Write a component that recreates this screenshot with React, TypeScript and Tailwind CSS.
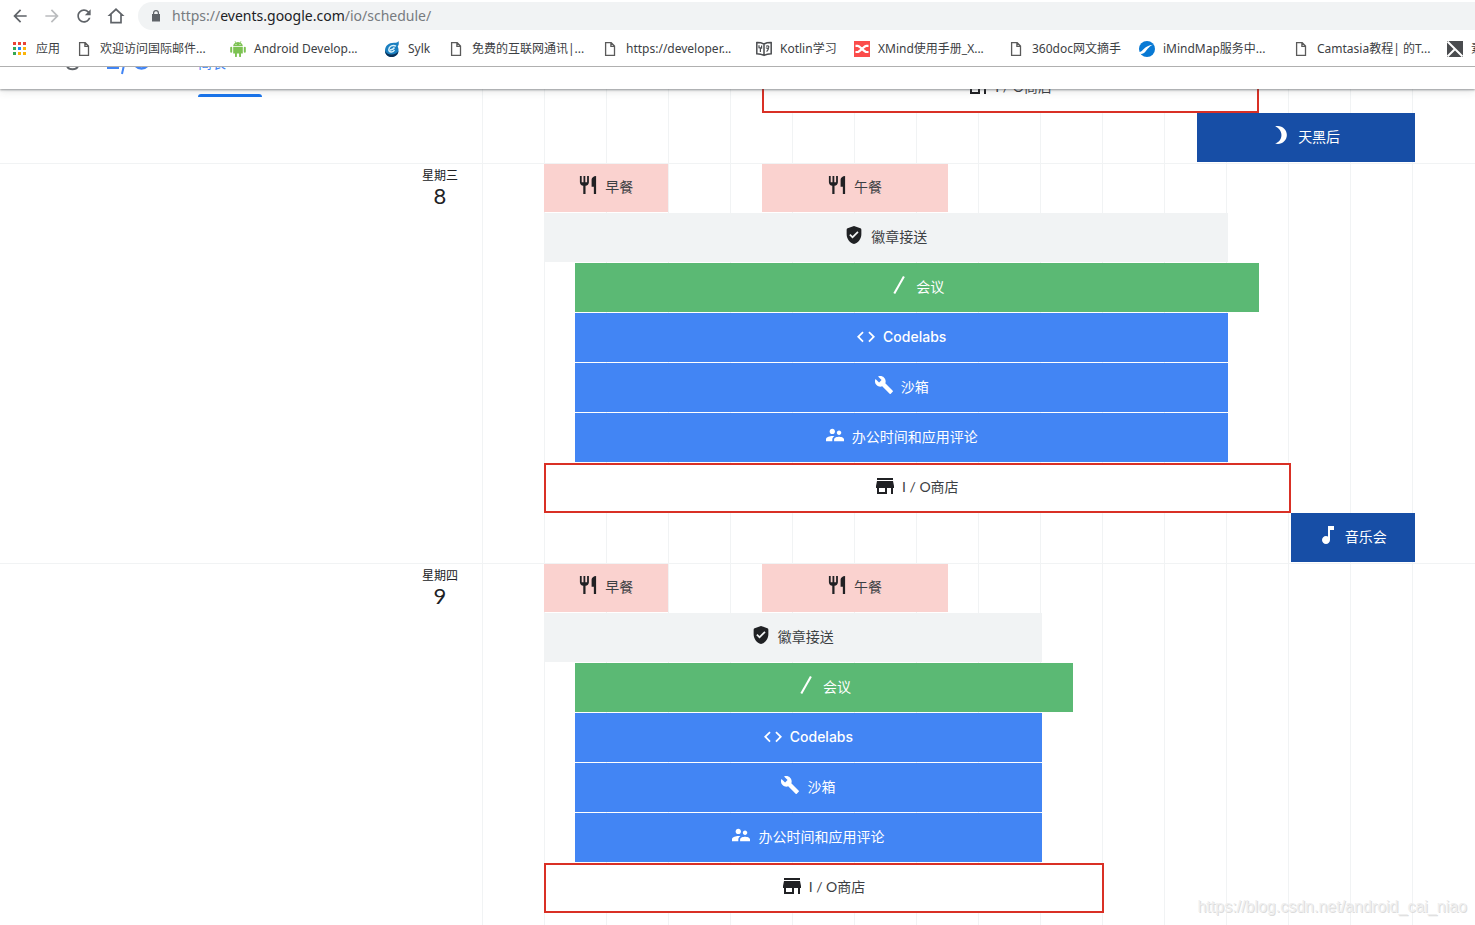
import React from "react";

type IconName = "food" | "badge" | "slash" | "code" | "wrench" | "people" | "store" | "moon" | "music";

const icons: Record<IconName, { box: string; d: string }> = {
  food: {
    box: "2 2 20 20",
    d: "M11 9H9V2H7v7H5V2H3v7c0 2.12 1.66 3.84 3.75 3.97V22h2.5v-9.03C11.34 12.84 13 11.12 13 9V2h-2v7zm5-3v8h2.5v8H21V2c-2.76 0-5 2.24-5 4z",
  },
  badge: {
    box: "1 1 22 22",
    d: "M12 1L4.2 3.8Q3 4.3 3 5.6V11c0 5.55 3.84 10.9 9 12 5.16-1.1 9-6.45 9-12V5.6q0-1.3-1.2-1.8L12 1zm-1.8 15.2l-4-4 1.5-1.5 2.5 2.5 5.9-5.9 1.5 1.5-7.4 7.4z",
  },
  slash: { box: "0 0 18 18", d: "M13 0l1.8.9L5.200 18l-1.800-.9z" },
  code: {
    box: "2 0 20 20",
    d: "M9.4 16.6L4.8 12l4.6-4.6L8 6l-6 6 6 6 1.4-1.4zm5.2 0l4.6-4.6-4.6-4.6L16 6l6 6-6 6-1.4-1.4z",
  },
  wrench: {
    box: "1 1 22 22",
    d: "M22.7 19l-9.1-9.1c.9-2.3.4-5-1.5-6.9-2-2-5-2.4-7.4-1.3L9 6 6 9 1.6 4.7C.4 7.1.9 10.1 2.9 12.1c1.9 1.9 4.6 2.4 6.9 1.5l9.1 9.1c.4.4 1 .4 1.4 0l2.3-2.3c.5-.4.5-1.1.1-1.4z",
  },
  people: {
    box: "2 2 20 20",
    d: "M16.5 12c1.38 0 2.49-1.12 2.49-2.5S17.88 7 16.5 7C15.12 7 14 8.12 14 9.5s1.12 2.5 2.5 2.5zM9 11c1.66 0 2.99-1.34 2.99-3S10.66 5 9 5C7.34 5 6 6.34 6 8s1.34 3 3 3zm7.5 3c-1.83 0-5.5.92-5.5 2.75V19h11v-2.25c0-1.83-3.67-2.75-5.5-2.75zM9 13c-2.33 0-7 1.17-7 3.5V19h7v-2.25c0-.85.33-2.34 2.37-3.47C10.5 13.1 9.66 13 9 13z",
  },
  store: {
    box: "3 2 18 18",
    d: "M20 4H4v2h16V4zm1 10v-2l-1-5H4l-1 5v2h1v6h10v-6h4v6h2v-6h1zm-9 4H6v-4h6v4z",
  },
  moon: {
    box: "2.5 2 20 20",
    d: "M9 2c-1.05 0-2.05.16-3 .46 4.06 1.27 7 5.06 7 9.54 0 4.48-2.94 8.27-7 9.54.95.3 1.95.46 3 .46 5.52 0 10-4.48 10-10S14.52 2 9 2z",
  },
  music: {
    box: "3 3 18 18",
    d: "M12 3v10.55c-.59-.34-1.27-.55-2-.55-2.21 0-4 1.79-4 4s1.79 4 4 4 4-1.79 4-4V7h4V3h-6z",
  },
};

type Tone = "pink" | "gray" | "green" | "blue" | "outline" | "navy";

const tones: Record<Tone, string> = {
  pink: "mb-px bg-[#fad2cf] text-[#3c4043]",
  gray: "mb-px bg-[#f1f3f4] text-[#3c4043]",
  green: "mb-px bg-[#5bb974] text-white",
  blue: "mb-px bg-[#4285f4] text-white",
  outline: "border-2 border-[#d93025] bg-white text-[#3c4043]",
  navy: "mb-px bg-[#174ea6] text-white",
};

type Session = { label: string; icon: IconName; tone: Tone; row: number; from: number; to: number };

const tuesday: Session[] = [
  { label: "I / O商店", icon: "store", tone: "outline", row: 1, from: 7, to: 23 },
  { label: "天黑后", icon: "moon", tone: "navy", row: 2, from: 21, to: 28 },
];

const wednesday: Session[] = [
  { label: "早餐", icon: "food", tone: "pink", row: 1, from: 0, to: 4 },
  { label: "午餐", icon: "food", tone: "pink", row: 1, from: 7, to: 13 },
  { label: "徽章接送", icon: "badge", tone: "gray", row: 2, from: 0, to: 22 },
  { label: "会议", icon: "slash", tone: "green", row: 3, from: 1, to: 23 },
  { label: "Codelabs", icon: "code", tone: "blue", row: 4, from: 1, to: 22 },
  { label: "沙箱", icon: "wrench", tone: "blue", row: 5, from: 1, to: 22 },
  { label: "办公时间和应用评论", icon: "people", tone: "blue", row: 6, from: 1, to: 22 },
  { label: "I / O商店", icon: "store", tone: "outline", row: 7, from: 0, to: 24 },
  { label: "音乐会", icon: "music", tone: "navy", row: 8, from: 24, to: 28 },
];

const thursday: Session[] = [
  { label: "早餐", icon: "food", tone: "pink", row: 1, from: 0, to: 4 },
  { label: "午餐", icon: "food", tone: "pink", row: 1, from: 7, to: 13 },
  { label: "徽章接送", icon: "badge", tone: "gray", row: 2, from: 0, to: 16 },
  { label: "会议", icon: "slash", tone: "green", row: 3, from: 1, to: 17 },
  { label: "Codelabs", icon: "code", tone: "blue", row: 4, from: 1, to: 16 },
  { label: "沙箱", icon: "wrench", tone: "blue", row: 5, from: 1, to: 16 },
  { label: "办公时间和应用评论", icon: "people", tone: "blue", row: 6, from: 1, to: 16 },
  { label: "I / O商店", icon: "store", tone: "outline", row: 7, from: 0, to: 18 },
];

function Bar({ item }: { item: Session }) {
  const light = item.tone === "green" || item.tone === "blue" || item.tone === "navy";
  return (
    <a
      href="#"
      className={`flex items-center justify-center gap-2 pb-0.5 text-sm ${item.icon === "code" ? "font-['Inter'] font-medium" : ""} ${tones[item.tone]}`}
      style={{ gridRow: item.row, gridColumn: `${item.from + 1} / ${item.to + 1}` }}
    >
      <svg
        viewBox={icons[item.icon].box}
        className={`mb-1 size-[18px] shrink-0 ${light ? "fill-white" : "fill-[#202124]"}`}
        aria-hidden="true"
      >
        <path d={icons[item.icon].d} />
      </svg>
      <span className="whitespace-nowrap">{item.label}</span>
    </a>
  );
}

function Day({ name, date, items, rows }: { name?: string; date?: string; items: Session[]; rows: string }) {
  return (
    <section className={`flex ${name ? "border-t border-[#f1f3f4]" : "-mt-1"}`}>
      <h2 className="flex w-[482px] shrink-0 justify-end pr-6 pt-1 text-[#202124]">
        {name && (
          <span className="flex flex-col items-center">
            <span className="text-xs leading-4">{name}</span>
            <span className="font-['Lato'] text-[22px] leading-6">{date}</span>
          </span>
        )}
      </h2>
      <div className={`ml-[62px] mr-[60px] grid flex-1 grid-cols-[repeat(28,minmax(0,1fr))] ${rows}`}>
        {items.map((item) => (
          <Bar key={`${item.row}-${item.from}`} item={item} />
        ))}
      </div>
    </section>
  );
}

const PageIcon = () => (
  <svg viewBox="0 0 16 16" className="size-4 shrink-0" fill="none" stroke="#5a5a5a" strokeWidth="1.3">
    <path d="M3.6 1.7h5.6l3.3 3.4v9.2H3.6zM8.9 1.7v3.6h3.6" />
  </svg>
);

const AppsIcon = () => (
  <svg viewBox="0 0 16 16" className="size-4 shrink-0">
    <path fill="#ea4335" d="M1 1h3v3H1zM6 1h3v3H6zM11 1h3v3h-3z" />
    <path fill="#34a853" d="M1 6h3v3H1zM1 11h3v3H1z" />
    <path fill="#1e88f5" d="M6 6h3v3H6z" />
    <path fill="#fbb40a" d="M11 6h3v3h-3zM6 11h3v3H6zM11 11h3v3h-3z" />
  </svg>
);

const AndroidIcon = () => (
  <svg viewBox="0 0 16 16" className="size-4 shrink-0" fill="#7cc252">
    <path d="M3.2 5.2C3.3 3.4 4.300 2.300 5.500 1.700L4.600.4l.5-.3 1 1.300a6 6 0 0 1 3.800 0l1-1.300.5.300-.9 1.300c1.200.6 2.200 1.700 2.300 3.500z" />
    <path d="M3.200 5.900h9.600v6.600H11v2.700a.9.9 0 0 1-1.900 0v-2.700H6.900v2.700a.9.900 0 0 1-1.900 0v-2.700H3.200z" />
    <rect x="0.200" y="5.800" width="2" height="6" rx="1" />
    <rect x="13.800" y="5.800" width="2" height="6" rx="1" />
    <circle cx="6" cy="3.600" r=".5" fill="white" />
    <circle cx="10" cy="3.600" r=".5" fill="white" />
  </svg>
);

const SylkIcon = () => (
  <svg viewBox="0 0 16 16" className="size-4 shrink-0">
    <path fill="#1a7fc0" d="M14.500 0c-1 1.500-2 1.700-4.500 1.700C4.500 1.700 1 5 1 9.500 1 13.500 4 16 7.500 16c4 0 6.500-2.500 7-6 .2-2-.2-3-.8-4.500C15 4 15 2 14.500 0z" />
    <path fill="#0a3057" d="M1 9.500C1 13.500 4 16 7.500 16c4 0 6.500-2.500 7-6-1.500 2-3.500 3.500-7 3.500S2 12 1 9.500z" />
    <path fill="none" stroke="#d9f1fb" strokeWidth="1.500" d="M12 5.200C9 3.500 5 5 4.800 8.500c0 3 4.200 3.500 5.700.5M6 9c2-.2 3.500-1 4.500-2.500" />
  </svg>
);

const BookIcon = () => (
  <svg viewBox="0 0 16 16" className="size-4 shrink-0" fill="none" stroke="#4b4d50" strokeWidth="1.500">
    <path d="M.8 1.600C3.500 1.500 6 2 8 3c2-1 4.500-1.500 7.200-1.400v11.200c-2.700 0-5 .4-7.200 1.600-2.200-1.200-4.500-1.600-7.200-1.600zM8 3v11" />
    <path strokeWidth="1.200" d="M3 4.200v2.500l2.600.3V4.600M4.400 6.900V11M10 5.200c2-1 3.200 0 2.600 1.400-.5 1-2.400.8-2.400 0M12.600 6.600c0 2-1 3-2 4" />
  </svg>
);

const XMindIcon = () => (
  <svg viewBox="0 0 16 16" className="size-4 shrink-0">
    <path fill="#fb4c4b" d="M0 0h16v16H0z" />
    <path fill="none" stroke="white" strokeWidth="2.200" d="M1.500 4.800h2.200C6 4.800 10 11 12.300 11h2.200M1.500 11h2.200C6 11 10 4.800 12.300 4.800h2.200" />
  </svg>
);

const MindMapIcon = () => (
  <svg viewBox="0 0 16 16" className="size-4 shrink-0">
    <circle cx="8" cy="8" r="8" fill="#0879d4" />
    <path fill="white" d="M0 11c4.500-.2 5-6.500 14-7.300C9 5.500 8 10 4.500 12.300 3 13.200 1.500 13.200 0 12.500z" />
  </svg>
);

const CrossIcon = () => (
  <svg viewBox="0 0 16 16" className="size-4 shrink-0">
    <path fill="#4a4c4f" d="M0 0h16v16H0z" />
    <path stroke="white" strokeWidth="2" d="M.5 .5l15 15M7.500 8.500L.5 15.500" />
  </svg>
);

const bookmarks = [
  { label: "应用", Icon: AppsIcon, width: "w-16" },
  { label: "欢迎访问国际邮件...", Icon: PageIcon, width: "w-[154px]" },
  { label: "Android Develop...", Icon: AndroidIcon, width: "w-[154px]" },
  { label: "Sylk", Icon: SylkIcon, width: "w-16" },
  { label: "免费的互联网通讯|...", Icon: PageIcon, width: "w-[154px]" },
  { label: "https://developer...", Icon: PageIcon, width: "w-[154px]" },
  { label: "Kotlin学习", Icon: BookIcon, width: "w-[98px]" },
  { label: "XMind使用手册_X...", Icon: XMindIcon, width: "w-[154px]" },
  { label: "360doc网文摘手", Icon: PageIcon, width: "w-[131px]" },
  { label: "iMindMap服务中...", Icon: MindMapIcon, width: "w-[154px]" },
  { label: "Camtasia教程| 的T...", Icon: PageIcon, width: "w-[154px]" },
  { label: "素材", Icon: CrossIcon, width: "w-[154px]" },
];

const navButtons = [
  { label: "后退", color: "fill-[#5f6368]", d: "M20 11H7.830l5.590-5.590L12 4l-8 8 8 8 1.410-1.410L7.830 13H20v-2z" },
  { label: "前进", color: "fill-[#babcbe]", d: "M12 4l-1.410 1.410L16.170 11H4v2h12.170l-5.580 5.590L12 20l8-8z" },
  {
    label: "刷新",
    color: "fill-[#5f6368]",
    d: "M17.650 6.350C16.200 4.900 14.210 4 12 4c-4.420 0-7.990 3.580-7.990 8s3.570 8 7.990 8c3.730 0 6.840-2.550 7.730-6h-2.080c-.82 2.330-3.040 4-5.650 4-3.310 0-6-2.690-6-6s2.690-6 6-6c1.660 0 3.140.69 4.220 1.780L13 11h7V4l-2.350 2.350z",
  },
  { label: "主页", color: "fill-[#5f6368]", d: "M12 2.500L1.800 12H5v9h14v-9h3.200L12 2.500zm0 2.800l5 4.700v9H7v-9l5-4.700z" },
];

export default function App() {
  return (
    <div className="flex h-screen flex-col overflow-hidden bg-white font-['Noto_Sans','Noto_Sans_CJK_SC',sans-serif]">
      <header className="shrink-0 border-b border-[#b0b0b0]">
        <div className="flex h-8 items-center gap-3 pl-[10px]">
          {navButtons.map(({ label, color, d }) => (
            <button key={label} type="button" aria-label={label} className="shrink-0">
              <svg viewBox="0 0 24 24" className={`size-5 ${color}`}>
                <path d={d} />
              </svg>
            </button>
          ))}
          <div className="flex h-7 flex-1 items-center gap-2 rounded-l-full bg-[#f1f3f4] pl-[10px] text-sm">
            <svg viewBox="0 0 16 16" className="size-4 shrink-0 fill-[#5f6368]" aria-hidden="true">
              <path d="M5 6V5a3 3 0 0 1 6 0v1h1v7.500H4V6zm1.200 0h3.600V5a1.800 1.800 0 0 0-3.600 0z" />
            </svg>
            <a href="#" className="text-[#777b80]">
              https://<span className="text-[#202124]">events.google.com</span>/io/schedule/
            </a>
          </div>
        </div>
        <nav className="flex h-[34px] items-center overflow-hidden pl-3 text-xs text-[#3c4043]">
          {bookmarks.map(({ label, Icon, width }) => (
            <a key={label} href="#" className={`flex shrink-0 items-center gap-2 whitespace-nowrap ${width}`}>
              <Icon />
              {label}
            </a>
          ))}
        </nav>
      </header>

      <main className="relative flex-1 overflow-hidden font-['Lato','Noto_Sans_CJK_SC',sans-serif]">
        <div className="absolute inset-y-0 left-[482px] right-px grid grid-cols-16" aria-hidden="true">
          {Array.from({ length: 16 }, (_, i) => (
            <div key={i} className="border-l border-[#f1f3f4]" />
          ))}
        </div>

        <div className="relative">
          <Day items={tuesday} rows="grid-rows-[repeat(2,50px)]" />
          <Day name="星期三" date="8" items={wednesday} rows="grid-rows-[49px_repeat(7,50px)]" />
          <Day name="星期四" date="9" items={thursday} rows="grid-rows-[49px_repeat(7,50px)]" />
        </div>

        <div className="absolute inset-x-0 top-0 h-[22px] bg-white shadow-[0_1px_2px_rgba(60,64,67,0.5),0_2px_8px_rgba(60,64,67,0.15)]">
          <div className="flex h-full items-start overflow-hidden pl-[66px] text-[#4285f4]">
            <svg viewBox="0 0 84 8" className="mr-12 h-2 w-[84px] shrink-0" fill="none" aria-label="Google I/O">
              <path d="M1 -1c1.500 4.300 9.500 4.300 11 0" stroke="#5f6368" strokeWidth="2" />
              <path d="M41 0h12v2H41z" fill="#4285f4" />
              <path d="M58 -2l-2 9" stroke="#4285f4" strokeWidth="2" />
              <path d="M69 -2c3 4.500 10 4.500 13 0" stroke="#4285f4" strokeWidth="2.500" />
            </svg>
            <a href="#" className="-mt-3 text-sm leading-4">简表</a>
          </div>
          <span className="absolute left-[198px] top-[27px] h-[3px] w-16 rounded-t-sm bg-[#1a73e8]" />
        </div>

        <p className="absolute bottom-2 right-2 font-['Liberation_Sans',sans-serif] text-base leading-5 text-[#efefef] [text-shadow:1px_1px_0_#dcdcdc]">
          https://blog.csdn.net/android_cai_niao
        </p>
      </main>
    </div>
  );
}
